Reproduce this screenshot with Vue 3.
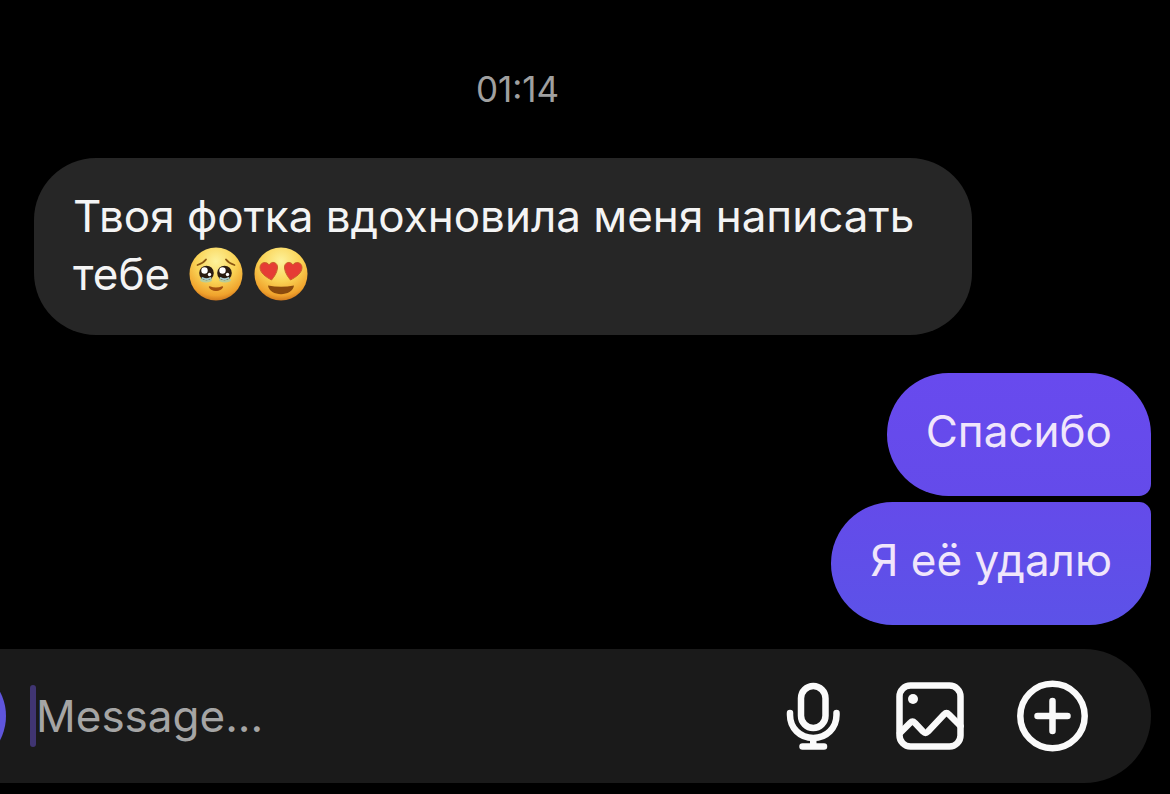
<script setup>
import { ref } from 'vue'

const draft = ref('')
const replies = ['Спасибо', 'Я её удалю']
</script>

<template>
  <main class="chat">
    <section class="thread" aria-label="Chat">
      <time class="stamp" datetime="01:14">01:14</time>

      <p class="bubble incoming">
        Твоя фотка вдохновила меня написать тебе
        <span class="emojis">
          <svg class="emoji" viewBox="0 0 54 54" role="img" aria-label="🥹">
            <defs>
              <radialGradient id="face" cx="50%" cy="26%" r="76%">
                <stop offset="0" stop-color="#fdf29c" />
                <stop offset="0.5" stop-color="#fad355" />
                <stop offset="0.85" stop-color="#f0a22c" />
                <stop offset="1" stop-color="#c9701b" />
              </radialGradient>
            </defs>
            <circle cx="27" cy="27" r="26.500" fill="url(#face)" />
            <path d="M8.500 18 Q14 16.500 17 12.500 M37 12.500 Q40 16.500 45.500 18" fill="none" stroke="#8a5510" stroke-width="1.800" stroke-linecap="round" />
            <ellipse cx="17" cy="33" rx="6" ry="2.500" fill="#b9cd9a" />
            <ellipse cx="36" cy="33" rx="6" ry="2.500" fill="#b9cd9a" />
            <circle cx="17.500" cy="26" r="7.300" fill="#2a1b10" />
            <circle cx="35.500" cy="26" r="7.300" fill="#2a1b10" />
            <circle cx="15.500" cy="23.500" r="3.200" fill="#fff" />
            <circle cx="33.500" cy="23.500" r="3.200" fill="#fff" />
            <circle cx="20.500" cy="27.500" r="1.700" fill="#fff" />
            <circle cx="38.500" cy="27.500" r="1.700" fill="#fff" />
            <path d="M13.500 31 Q17.500 33.500 21.500 31 M31.500 31 Q35.500 33.500 39.500 31" fill="none" stroke="#a9ccd0" stroke-width="2" stroke-linecap="round" />
            <path d="M20.500 40 C23 44.500 31 44.500 33.500 40 Q27 42.500 20.500 40Z" fill="#a3500f" stroke="#a3500f" stroke-width="1.400" stroke-linejoin="round" />
          </svg>
          <svg class="emoji" viewBox="0 0 54 54" role="img" aria-label="😍">
            <circle cx="27" cy="27" r="26.500" fill="url(#face)" />
            <path d="M17.500 33 C12 30 6 26 6 20.500 C6 15 13 14 15 18 C17.500 13.500 24 15 23.500 21 C23 26 20 30 17.500 33Z" fill="#e63c35" stroke="#c8602a" />
            <path d="M36.500 33 C42 30 48 26 48 20.500 C48 15 41 14 39 18 C36.500 13.500 30 15 30.500 21 C31 26 34 30 36.500 33Z" fill="#e63c35" stroke="#c8602a" />
            <path d="M14 38.500 Q27 41 40 38.500 C38.500 50 15.500 50 14 38.500Z" fill="#8b4a0d" />
          </svg>
        </span>
      </p>

      <div class="replies">
        <p v-for="text in replies" :key="text" class="bubble outgoing">{{ text }}</p>
      </div>
    </section>

    <form class="composer" @submit.prevent>
      <button class="camera" type="button" aria-label="Camera"></button>
      <span class="caret" aria-hidden="true"></span>
      <input v-model="draft" class="field" type="text" placeholder="Message..." aria-label="Message" />
      <div class="actions">
        <button class="action" type="button" aria-label="Voice message">
          <svg viewBox="0 0 72 72">
            <rect x="25" y="6" width="24.500" height="42" rx="12.250" />
            <path d="M14 33v2c0 13 10 23 23.250 23S60.500 48 60.500 35v-2M37.250 58v8M26.500 66.500h21.500" />
          </svg>
        </button>
        <button class="action" type="button" aria-label="Photo">
          <svg viewBox="0 0 72 72">
            <rect x="3.500" y="5.500" width="61" height="61" rx="11" />
            <path d="M4 53 L14 43 Q16.500 40.500 19 43 L27 51.500 Q29.500 54 32 51.500 L48 34.500 Q50.500 32 53 34.500 L64.500 46" />
            <circle class="dot" cx="17" cy="19" r="5" />
          </svg>
        </button>
        <button class="action" type="button" aria-label="More">
          <svg viewBox="0 0 72 72">
            <circle cx="36.500" cy="36" r="32.200" />
            <path d="M36.500 21v30M21.500 36h30" />
          </svg>
        </button>
      </div>
    </form>
  </main>
</template>

<style>
body {
  margin: 0;
  background: #000;
}
</style>

<style scoped>
.chat {
  display: flex;
  flex-direction: column;
  box-sizing: border-box;
  min-height: 100vh;
  padding-bottom: 11px;
  overflow: hidden;
  background: #000;
  color: #f4f4f4;
  font-family: Inter, "Noto Sans", sans-serif;
  font-size: 44px;
  line-height: 58px;
}

.thread {
  display: flex;
  flex-direction: column;
  padding: 69px 19px 24px 34px;
}

.stamp {
  align-self: center;
  margin-right: 150px;
  color: #a0a0a0;
  font-size: 35px;
  line-height: 40px;
}

.bubble {
  box-sizing: border-box;
  margin: 0;
  padding: 29px 39px 36px;
  border-radius: 62px;
}

.incoming {
  width: 84%;
  margin-top: 49px;
  padding-bottom: 32px;
  background: #262626;
}

.emojis {
  display: inline-flex;
  align-items: center;
  gap: 11px;
  height: 58px;
  margin-left: 6px;
  vertical-align: top;
}

.emoji {
  width: 54px;
  height: 54px;
}

.replies {
  display: flex;
  flex-direction: column;
  align-items: flex-end;
  gap: 6px;
  margin-top: 38px;
}

.outgoing {
  background: linear-gradient(#684aee, #644bea);
  color: #f0e6fb;
}

.outgoing:first-child {
  border-bottom-right-radius: 12px;
}

.outgoing:last-child {
  border-top-right-radius: 12px;
  background: linear-gradient(#644bea, #5c52e8);
}

.composer {
  display: flex;
  align-items: center;
  height: 134px;
  margin: auto 19px 0 0;
  padding-right: 63px;
  border-radius: 0 67px 67px 0;
  background: #1a1a1a;
}

.camera {
  flex: none;
  width: 104px;
  height: 104px;
  margin-left: -98px;
  padding: 0;
  border: 0;
  border-radius: 50%;
  background: #5f55dc;
}

.caret {
  flex: none;
  width: 6px;
  height: 62px;
  margin-left: 24px;
  border-radius: 3px;
  background: #403572;
}

.field {
  flex: 1;
  min-width: 0;
  padding: 0;
  border: 0;
  outline: 0;
  background: transparent;
  color: #f4f4f4;
  font: inherit;
}

.field::placeholder {
  color: #a5a5a5;
  opacity: 1;
}

.actions {
  display: flex;
  gap: 48px;
}

.action {
  width: 72px;
  height: 72px;
  padding: 0;
  border: 0;
  background: transparent;
}

.action svg {
  display: block;
  width: 72px;
  height: 72px;
  fill: none;
  stroke: #fafafa;
  stroke-width: 6.5;
  stroke-linecap: round;
  stroke-linejoin: round;
}

.action .dot {
  fill: #fafafa;
  stroke: none;
}
</style>
